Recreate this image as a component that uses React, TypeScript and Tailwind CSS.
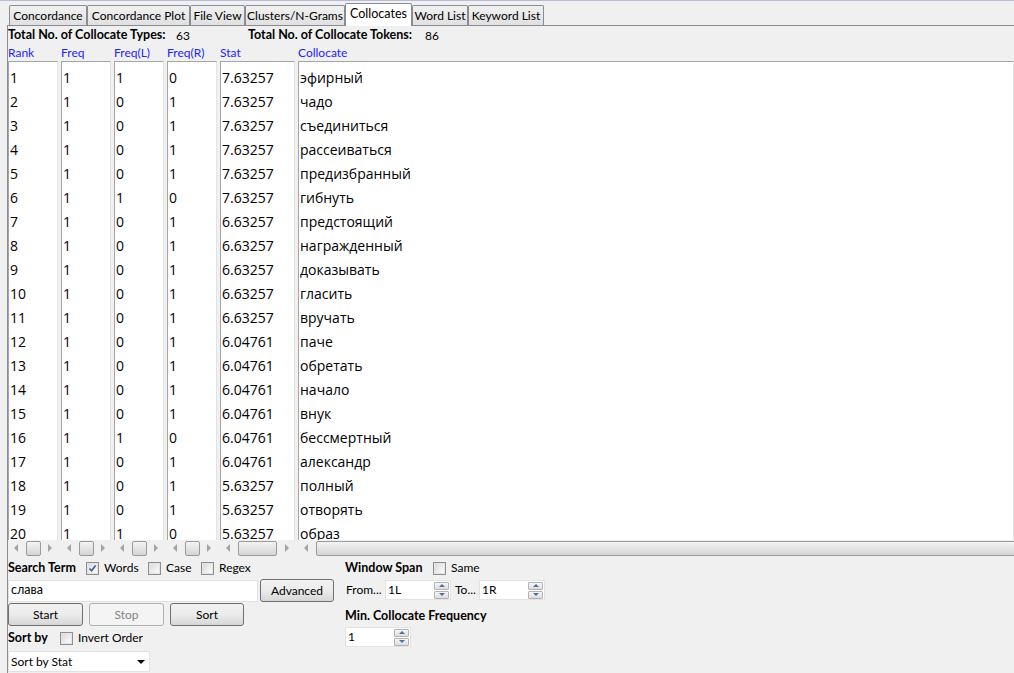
import type { ReactNode } from 'react'

const collocates = [
  ['1', '1', '1', '0', '7.63257', 'эфирный'],
  ['2', '1', '0', '1', '7.63257', 'чадо'],
  ['3', '1', '0', '1', '7.63257', 'съединиться'],
  ['4', '1', '0', '1', '7.63257', 'рассеиваться'],
  ['5', '1', '0', '1', '7.63257', 'предизбранный'],
  ['6', '1', '1', '0', '7.63257', 'гибнуть'],
  ['7', '1', '0', '1', '6.63257', 'предстоящий'],
  ['8', '1', '0', '1', '6.63257', 'награжденный'],
  ['9', '1', '0', '1', '6.63257', 'доказывать'],
  ['10', '1', '0', '1', '6.63257', 'гласить'],
  ['11', '1', '0', '1', '6.63257', 'вручать'],
  ['12', '1', '0', '1', '6.04761', 'паче'],
  ['13', '1', '0', '1', '6.04761', 'обретать'],
  ['14', '1', '0', '1', '6.04761', 'начало'],
  ['15', '1', '0', '1', '6.04761', 'внук'],
  ['16', '1', '1', '0', '6.04761', 'бессмертный'],
  ['17', '1', '0', '1', '6.04761', 'александр'],
  ['18', '1', '0', '1', '5.63257', 'полный'],
  ['19', '1', '0', '1', '5.63257', 'отворять'],
  ['20', '1', '1', '0', '5.63257', 'образ'],
]

const tabs = [
  { label: 'Concordance', w: 'w-[78px]' },
  { label: 'Concordance Plot', w: 'w-[103px]' },
  { label: 'File View', w: 'w-[55px]' },
  { label: 'Clusters/N-Grams', w: 'w-[100px]' },
  { label: 'Collocates', w: 'w-[67px]', active: true },
  { label: 'Word List', w: 'w-[56px]' },
  { label: 'Keyword List', w: 'w-[76px]' },
]

function Arrow({ dir }: { dir: 'left' | 'right' }) {
  return (
    <div className="flex w-[16px] shrink-0 items-center justify-center">
      <div
        className={
          dir === 'left'
            ? 'h-0 w-0 border-y-[4px] border-r-[4px] border-y-transparent border-r-[#a3a3a3]'
            : 'h-0 w-0 border-y-[4px] border-l-[4px] border-y-transparent border-l-[#a3a3a3]'
        }
      />
    </div>
  )
}

function ScrollBar({ thumb, long }: { thumb: string; long?: boolean }) {
  return (
    <div className="flex h-[16px] items-center overflow-hidden">
      <Arrow dir="left" />
      <div
        className={`ml-[2px] h-[15px] shrink-0 rounded-[2px] border border-[#9a9a9a] bg-gradient-to-b from-[#f4f4f4] to-[#d4d4d4] ${thumb}`}
      />
      {!long && <div className="flex-1" />}
      {!long && <Arrow dir="right" />}
    </div>
  )
}

function Column({
  title,
  w,
  box,
  thumb,
  idx,
  long,
}: {
  title: string
  w: string
  box: string
  thumb: string
  idx: number
  long?: boolean
}) {
  return (
    <div className={`flex shrink-0 flex-col ${w}`}>
      <div className="h-[16px] text-[12px] leading-[16px] text-[#2323ff]">{title}</div>
      <div className={box}>
        <div className="h-[479px] overflow-hidden border-l border-t border-r border-[#a5a5a5] border-r-[#e3e3e3] bg-white pt-[4px] font-['Open_Sans',sans-serif]">
          {collocates.map((r) => (
            <div key={r[0]} className="h-[24px] whitespace-nowrap pl-[1px] text-[14px] leading-[24px] text-black">
              {r[idx]}
            </div>
          ))}
        </div>
        <ScrollBar thumb={thumb} long={long} />
      </div>
    </div>
  )
}

function CheckBox({ checked }: { checked?: boolean }) {
  return (
    <div className="flex h-[13px] w-[13px] shrink-0 items-center justify-center border border-[#8e8f8f] bg-white">
      <div className="flex h-[11px] w-[11px] items-center justify-center border border-[#e3e3e3] bg-gradient-to-br from-[#dcdcdc] to-[#fbfbfb]">
        {checked && (
          <svg width="9" height="9" viewBox="0 0 9 9">
            <path d="M1.5 4.5 L3.6 6.8 L7.6 1.6" fill="none" stroke="#4a5f97" strokeWidth="1.7" />
          </svg>
        )}
      </div>
    </div>
  )
}

function Check({ label, checked, w }: { label: string; checked?: boolean; w?: string }) {
  return (
    <div className={`flex items-center gap-[5px] ${w ?? ''}`}>
      <CheckBox checked={checked} />
      <span className="whitespace-nowrap text-[12px] leading-[16px]">{label}</span>
    </div>
  )
}

function Button({ children, w, disabled }: { children: ReactNode; w: string; disabled?: boolean }) {
  return (
    <div
      className={`flex h-[23px] shrink-0 items-center justify-center rounded-[3px] border text-[12px] ${w} ${
        disabled
          ? 'border-[#adb2b5] bg-[#f4f4f4] text-[#838383]'
          : 'border-[#707070] bg-gradient-to-b from-[#f2f2f2] via-[#ebebeb] to-[#d7d7d7] text-black'
      }`}
    >
      {children}
    </div>
  )
}

function Spinner({ value, w, h }: { value: string; w: string; h: string }) {
  return (
    <div className={`flex shrink-0 items-center border border-[#e3e3e3] bg-white pl-[2px] ${w} ${h}`}>
      <span className="flex-1 text-[12px] leading-[16px]">{value}</span>
      <div className="mr-[1px] flex flex-col gap-[1px]">
        <div className="flex h-[8px] w-[15px] items-center justify-center rounded-[1px] border border-[#b3b3b3] bg-gradient-to-b from-[#f6f6f6] to-[#dedede]">
          <div className="h-0 w-0 border-x-[3px] border-b-[3px] border-x-transparent border-b-[#4d6fa8]" />
        </div>
        <div className="flex h-[8px] w-[15px] items-center justify-center rounded-[1px] border border-[#b3b3b3] bg-gradient-to-b from-[#f6f6f6] to-[#dedede]">
          <div className="h-0 w-0 border-x-[3px] border-t-[3px] border-x-transparent border-t-[#4d6fa8]" />
        </div>
      </div>
    </div>
  )
}

export default function App() {
  return (
    <div className="h-[673px] w-[1014px] overflow-hidden border-t border-[#b6bdd3] bg-[#f0f0f0] font-['Lato','Open_Sans',sans-serif] text-black">
      {/* tab strip */}
      <div className="flex h-[24px] items-end pl-[9px]">
        {tabs.map((t) =>
          t.active ? (
            <div
              key={t.label}
              className={`relative z-10 -mb-px flex h-[23px] items-center justify-center whitespace-nowrap rounded-t-[2px] border border-b-0 border-[#898c95] bg-white pb-[1px] text-[12.5px] ${t.w}`}
            >
              {t.label}
            </div>
          ) : (
            <div
              key={t.label}
              className={`flex h-[20px] items-center justify-center whitespace-nowrap rounded-t-[2px] border border-b-0 border-[#898c95] bg-gradient-to-b from-[#f2f2f2] to-[#e0e0e0] text-[12px] ${t.w}`}
            >
              {t.label}
            </div>
          ),
        )}
      </div>

      {/* tab panel */}
      <div className="ml-[7px] flex h-[648px] flex-col border-l border-t border-[#898c95]">
        <div className="flex h-[19px] items-center whitespace-nowrap text-[12px]">
          <span className="w-[168px] text-[12.5px] font-bold">Total No. of Collocate Types:</span>
          <span className="w-[72px]">63</span>
          <span className="w-[177px] text-[12.5px] font-bold">Total No. of Collocate Tokens:</span>
          <span>86</span>
        </div>

        <div className="flex">
          <Column title="Rank" idx={0} w="w-[53px]" box="w-[50px]" thumb="w-[15px]" />
          <Column title="Freq" idx={1} w="w-[53px]" box="w-[50px]" thumb="w-[15px]" />
          <Column title="Freq(L)" idx={2} w="w-[53px]" box="w-[50px]" thumb="w-[15px]" />
          <Column title="Freq(R)" idx={3} w="w-[53px]" box="w-[50px]" thumb="w-[15px]" />
          <Column title="Stat" idx={4} w="w-[78px]" box="w-[75px]" thumb="w-[39px]" />
          <Column title="Collocate" idx={5} w="w-[716px]" box="w-[716px]" thumb="w-[720px]" long />
        </div>

        {/* controls */}
        <div className="flex">
          <div className="flex w-[337px] shrink-0 flex-col">
            <div className="mt-[4px] flex h-[16px] items-center">
              <span className="w-[78px] whitespace-nowrap text-[12.5px] font-bold">Search Term</span>
              <Check label="Words" checked w="w-[62px]" />
              <Check label="Case" w="w-[53px]" />
              <Check label="Regex" />
            </div>
            <div className="mt-[3px] flex items-center gap-[2px]">
              <div className="flex h-[22px] w-[250px] items-center border border-[#e3e3e3] bg-white pl-[2px] text-[12.5px]">
                слава
              </div>
              <Button w="w-[74px]">Advanced</Button>
            </div>
            <div className="mt-[1px] flex gap-[6px]">
              <Button w="w-[75px]">Start</Button>
              <Button w="w-[75px]" disabled>
                Stop
              </Button>
              <Button w="w-[74px]">Sort</Button>
            </div>
            <div className="mt-[4px] flex h-[16px] items-center">
              <span className="w-[52px] text-[12.5px] font-bold">Sort by</span>
              <Check label="Invert Order" />
            </div>
            <div className="mt-[5px] flex h-[21px] w-[142px] items-center justify-between border border-[#e3e3e3] bg-white pl-[2px] pr-[4px] text-[12px]">
              <span>Sort by Stat</span>
              <div className="h-0 w-0 border-x-[4px] border-t-[4px] border-x-transparent border-t-black" />
            </div>
          </div>

          <div className="flex flex-col">
            <div className="mt-[4px] flex h-[16px] items-center">
              <span className="w-[88px] whitespace-nowrap text-[12.5px] font-bold">Window Span</span>
              <Check label="Same" />
            </div>
            <div className="mt-[4px] flex items-center">
              <span className="w-[40px] pl-[1px] text-[12px]">From...</span>
              <Spinner value="1L" w="w-[66px]" h="h-[20px]" />
              <span className="w-[28px] pl-[4px] text-[12px]">To...</span>
              <Spinner value="1R" w="w-[66px]" h="h-[20px]" />
            </div>
            <div className="mt-[8px] h-[16px] whitespace-nowrap text-[12.5px] font-bold leading-[16px]">
              Min. Collocate Frequency
            </div>
            <div className="mt-[3px]">
              <Spinner value="1" w="w-[66px]" h="h-[20px]" />
            </div>
          </div>
        </div>
      </div>
    </div>
  )
}
